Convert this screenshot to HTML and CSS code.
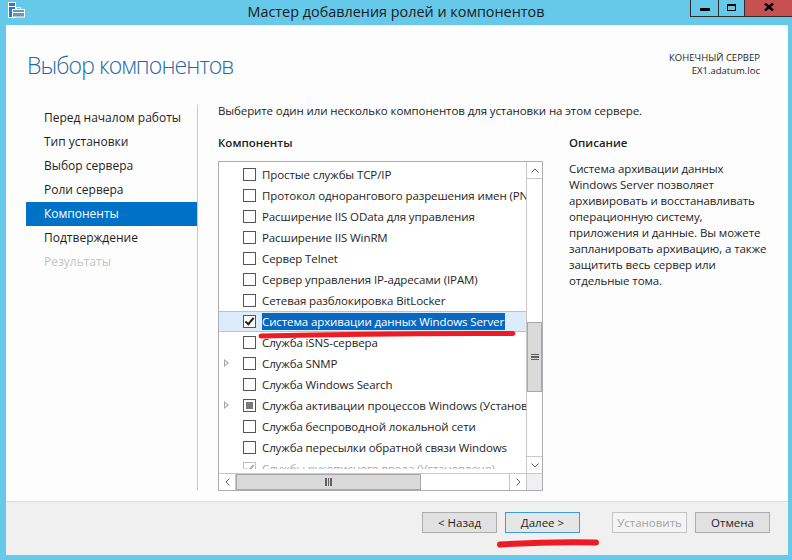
FILE: index.html
```html
<!DOCTYPE html>
<html lang="ru">
<head>
    <meta charset="UTF-8">
    <title>Мастер добавления ролей и компонентов</title>
    <link rel="stylesheet" href="styles.css">
</head>
<body>

<div class="window">
    <div class="titlebar">
        <div class="title-left">
            <svg class="app-icon" width="17" height="16" viewBox="0 0 17 16">
                <rect x="0.5" y="0.5" width="7" height="15" fill="#1f7fd0" stroke="#fff"/>
                <line x1="1" y1="4.5" x2="7" y2="4.5" stroke="#fff"/>
                <rect x="4.5" y="7.5" width="12" height="7.5" fill="#6d93b8" stroke="#fff"/>
                <path d="M8.5 7.5 V5.5 H12.5 V7.5" fill="none" stroke="#fff"/>
                <line x1="5" y1="10.5" x2="16" y2="10.5" stroke="#fff"/>
            </svg>
        </div>
        <div class="title">Мастер добавления ролей и компонентов</div>
        <div class="title-right">
            <div class="controls">
                <span class="ctl ctl-min"><i></i></span>
                <span class="ctl ctl-max"><i></i></span>
                <span class="ctl ctl-close">
                    <svg width="10" height="8" viewBox="0 0 10 8">
                        <path d="M1 0.5 L9 7.5 M9 0.5 L1 7.5" stroke="#000" stroke-width="2.4"/>
                    </svg>
                </span>
            </div>
        </div>
    </div>

    <div class="client">
        <div class="page">
            <div class="page-header">
                <h1>Выбор компонентов</h1>
                <div class="target">КОНЕЧНЫЙ СЕРВЕР<br>EX1.adatum.loc</div>
            </div>

            <div class="page-body">
                <ul class="steps">
                    <li>Перед началом работы</li>
                    <li>Тип установки</li>
                    <li>Выбор сервера</li>
                    <li>Роли сервера</li>
                    <li class="active">Компоненты</li>
                    <li>Подтверждение</li>
                    <li class="disabled">Результаты</li>
                </ul>

                <div class="main">
                    <p class="intro">Выберите один или несколько компонентов для установки на этом сервере.</p>
                    <div class="columns">
                        <div class="col-list">
                            <div class="col-head">Компоненты</div>
                            <div class="listbox">
                                <div class="rows">
                                    <div class="row"><span class="exp"></span><span class="cb"></span><span class="label">Простые службы TCP/IP</span></div>
                                    <div class="row"><span class="exp"></span><span class="cb"></span><span class="label">Протокол однорангового разрешения имен (PNRP)</span></div>
                                    <div class="row"><span class="exp"></span><span class="cb"></span><span class="label">Расширение IIS OData для управления</span></div>
                                    <div class="row"><span class="exp"></span><span class="cb"></span><span class="label">Расширение IIS WinRM</span></div>
                                    <div class="row"><span class="exp"></span><span class="cb"></span><span class="label">Сервер Telnet</span></div>
                                    <div class="row"><span class="exp"></span><span class="cb"></span><span class="label">Сервер управления IP-адресами (IPAM)</span></div>
                                    <div class="row"><span class="exp"></span><span class="cb"></span><span class="label">Сетевая разблокировка BitLocker</span></div>
                                    <div class="row selected"><span class="exp"></span><span class="cb checked"></span><span class="label">Система архивации данных Windows Server</span></div>
                                    <div class="row"><span class="exp"></span><span class="cb"></span><span class="label">Служба iSNS-сервера</span></div>
                                    <div class="row"><span class="exp has-children"></span><span class="cb"></span><span class="label">Служба SNMP</span></div>
                                    <div class="row"><span class="exp"></span><span class="cb"></span><span class="label">Служба Windows Search</span></div>
                                    <div class="row"><span class="exp has-children"></span><span class="cb partial"></span><span class="label">Служба активации процессов Windows (Установлено 2 из 3)</span></div>
                                    <div class="row"><span class="exp"></span><span class="cb"></span><span class="label">Служба беспроводной локальной сети</span></div>
                                    <div class="row"><span class="exp"></span><span class="cb"></span><span class="label">Служба пересылки обратной связи Windows</span></div>
                                    <div class="row installed"><span class="exp"></span><span class="cb checked"></span><span class="label">Службы рукописного ввода (Установлено)</span></div>
                                </div>
                                <div class="vscroll">
                                    <div class="arrow arrow-up">
                                        <svg width="8" height="5" viewBox="0 0 8 5"><path d="M0.5 4.5 L4 1 L7.5 4.5" fill="none" stroke="#606060"/></svg>
                                    </div>
                                    <div class="track">
                                        <div class="thumb thumb-v"><i></i><i></i><i></i></div>
                                    </div>
                                    <div class="arrow arrow-down">
                                        <svg width="8" height="5" viewBox="0 0 8 5"><path d="M0.5 0.5 L4 4 L7.5 0.5" fill="none" stroke="#606060"/></svg>
                                    </div>
                                </div>
                                <div class="hscroll">
                                    <div class="arrow arrow-left">
                                        <svg width="5" height="8" viewBox="0 0 5 8"><path d="M4.5 0.5 L1 4 L4.5 7.5" fill="none" stroke="#606060"/></svg>
                                    </div>
                                    <div class="track">
                                        <div class="thumb thumb-h"><i></i><i></i><i></i></div>
                                    </div>
                                    <div class="arrow arrow-right">
                                        <svg width="5" height="8" viewBox="0 0 5 8"><path d="M0.5 0.5 L4 4 L0.5 7.5" fill="none" stroke="#606060"/></svg>
                                    </div>
                                </div>
                                <div class="corner"></div>
                            </div>
                        </div>
                        <div class="col-desc">
                            <div class="col-head">Описание</div>
                            <p class="desc">Система архивации данных<br>Windows Server позволяет<br>архивировать и восстанавливать<br>операционную систему,<br>приложения и данные. Вы можете<br>запланировать архивацию, а также<br>защитить весь сервер или<br>отдельные тома.</p>
                        </div>
                    </div>
                </div>
            </div>
        </div>

        <div class="footer">
            <button class="btn">&lt; Назад</button>
            <button class="btn btn-default">Далее &gt;</button>
            <button class="btn btn-install" disabled>Установить</button>
            <button class="btn">Отмена</button>
        </div>
    </div>

    <!-- красные пометки поверх скриншота -->
    <svg class="marks" width="792" height="560" viewBox="0 0 792 560">
        <path d="M261 336 Q 380 333 513 333.5" fill="none" stroke="#ed1c24" stroke-width="5" stroke-linecap="round"/>
        <path d="M500 544.5 Q 550 541.5 596 542.5" fill="none" stroke="#ed1c24" stroke-width="6" stroke-linecap="round"/>
    </svg>
</div>

</body>
</html>
```

FILE: styles.css
```css
body {
    margin: 0;
    background-color: #66c9ea;
    font-family: "Open Sans", "Noto Sans", sans-serif;
    color: #1e1e1e;
    overflow: hidden;
}

.window {
    position: relative;
    width: 792px;
    height: 560px;
    display: flex;
    flex-direction: column;
}

/* заголовок окна */
.titlebar {
    height: 25px;
    display: grid;
    grid-template-columns: 1fr auto 1fr;
    align-items: start;
}

.app-icon {
    display: block;
    margin: 2px 0 0 8px;
}

.title {
    font-size: 14.4px;
    line-height: 24px;
    color: #1a1a1a;
}

.title-right {
    display: flex;
    justify-content: flex-end;
}

.controls {
    display: flex;
    height: 16px;
    border-left: 1px solid #2d2d2d;
    border-bottom: 1px solid #2d2d2d;
}

.ctl {
    display: flex;
    justify-content: center;
    align-items: center;
    height: 16px;
}

.ctl-min {
    width: 27px;
    border-right: 1px solid #2d2d2d;
}

.ctl-min i {
    display: block;
    width: 10px;
    height: 3px;
    background: #000;
    margin-top: 3px;
}

.ctl-max {
    width: 25px;
    border-right: 1px solid #2d2d2d;
}

.ctl-max i {
    display: block;
    box-sizing: border-box;
    width: 9px;
    height: 7px;
    border: 1.5px solid #000;
    border-top-width: 2px;
    margin-top: -2px;
}

.ctl-close {
    width: 47px;
    background-color: #c75050;
}

.ctl-close svg {
    display: block;
    margin-top: -2px;
}

/* клиентская область */
.client {
    flex: 1;
    margin: 0 4px 5px 6px;
    background-color: #fdfdfd;
    display: flex;
    flex-direction: column;
}

.page {
    flex: 1;
}

.page-header {
    height: 78px;
    display: flex;
    justify-content: space-between;
    align-items: flex-start;
    padding: 0 28px 0 21px;
}

.page-header h1 {
    margin: 24px 0 0;
    font-size: 23px;
    line-height: 32px;
    font-weight: 300;
    letter-spacing: -0.9px;
    color: #1f6aa5;
}

.target {
    margin-top: 26px;
    font-size: 9.5px;
    line-height: 13px;
    text-align: right;
    color: #1e1e1e;
}

.page-body {
    display: flex;
}

.steps {
    list-style: none;
    margin: 2px 0 0 20px;
    padding: 1px 0 0;
    width: 172px;
    height: 385px;
    box-sizing: border-box;
    border-right: 1px solid #c8c8c8;
}

.steps li {
    height: 24px;
    line-height: 24px;
    padding-left: 18px;
    font-size: 12px;
    color: #1e1e1e;
}

.steps li.active {
    background-color: #0072c6;
    color: #fff;
}

.steps li.disabled {
    color: #c4c4c4;
}

.main {
    padding-left: 20px;
}

.intro {
    margin: 0;
    font-size: 11.5px;
    letter-spacing: -0.1px;
    line-height: 16px;
}

.columns {
    display: flex;
    margin-top: 16px;
}

.col-head {
    font-size: 11.5px;
    line-height: 16px;
    font-weight: 600;
    margin-bottom: 10px;
}

/* список компонентов */
.listbox {
    width: 325px;
    height: 330px;
    box-sizing: border-box;
    border: 1px solid #abadb3;
    display: grid;
    grid-template-columns: 1fr 16px;
    grid-template-rows: 1fr 17px;
    background: #fff;
}

.rows {
    overflow: hidden;
    box-sizing: border-box;
    padding-top: 2px;
    border-bottom: 4px solid #fff;
    min-width: 0;
}

.row {
    height: 21px;
    box-sizing: border-box;
    display: flex;
    align-items: center;
    white-space: nowrap;
    font-size: 11.5px;
    letter-spacing: -0.1px;
}

.row.selected {
    background-color: #deebfb;
    border-top: 1px solid #a3c7ee;
    border-bottom: 1px solid #a3c7ee;
}

.row.selected .label {
    background-color: #0b68c0;
    color: #fff;
    line-height: 17px;
    padding-right: 1px;
}

.row.installed .label {
    color: #a8a8a8;
}

.exp {
    width: 24px;
    height: 21px;
    flex-shrink: 0;
    position: relative;
}

.exp.has-children::before {
    content: "";
    position: absolute;
    left: 5px;
    top: 6px;
    border-left: 5px solid #a6a6a6;
    border-top: 4px solid transparent;
    border-bottom: 4px solid transparent;
}

.exp.has-children::after {
    content: "";
    position: absolute;
    left: 6px;
    top: 8px;
    border-left: 2px solid #fff;
    border-top: 2px solid transparent;
    border-bottom: 2px solid transparent;
}

.cb {
    width: 13px;
    height: 13px;
    box-sizing: border-box;
    border: 1px solid #555;
    background: #fff;
    flex-shrink: 0;
    margin-right: 6px;
    position: relative;
}

.cb.checked::after {
    content: "";
    position: absolute;
    left: 3px;
    top: 0px;
    width: 3px;
    height: 7px;
    border-right: 2px solid #222;
    border-bottom: 2px solid #222;
    transform: rotate(40deg);
}

.cb.partial::after {
    content: "";
    position: absolute;
    left: 2px;
    top: 2px;
    width: 7px;
    height: 7px;
    background: #7a7a7a;
}

.row.installed .cb {
    border-color: #c0c0c0;
}

.row.installed .cb::after {
    border-color: #b0b0b0;
}

/* полосы прокрутки */
.vscroll {
    border-left: 1px solid #c8c8c8;
    display: flex;
    flex-direction: column;
}

.vscroll .arrow {
    height: 16px;
    display: flex;
    justify-content: center;
    align-items: center;
}

.arrow-up {
    border-bottom: 1px solid #c8c8c8;
}

.arrow-down {
    border-top: 1px solid #c8c8c8;
}

.vscroll .track {
    flex: 1;
}

.thumb {
    box-sizing: border-box;
    background-color: #dadada;
    border: 1px solid #a8a8a8;
    display: flex;
    justify-content: center;
    align-items: center;
}

.thumb-v {
    height: 70px;
    margin-top: 143px;
    flex-direction: column;
    gap: 1px;
}

.thumb-v i {
    display: block;
    width: 8px;
    height: 1.5px;
    background: #606060;
}

.hscroll {
    border-top: 1px solid #c8c8c8;
    display: flex;
}

.hscroll .arrow {
    width: 16px;
    display: flex;
    justify-content: center;
    align-items: center;
}

.arrow-left {
    border-right: 1px solid #c8c8c8;
}

.arrow-right {
    border-left: 1px solid #c8c8c8;
}

.hscroll .track {
    flex: 1;
    display: flex;
}

.thumb-h {
    width: 185px;
    gap: 1px;
}

.thumb-h i {
    display: block;
    width: 1.5px;
    height: 8px;
    background: #606060;
}

.corner {
    background-color: #f0f0f0;
    border-top: 1px solid #c8c8c8;
    border-left: 1px solid #c8c8c8;
}

/* описание */
.col-desc {
    margin-left: 26px;
}

.desc {
    margin: 0;
    font-size: 11.5px;
    letter-spacing: -0.1px;
    line-height: 16px;
}

/* нижняя панель с кнопками */
.footer {
    height: 43px;
    border-top: 1px solid #dcdcdc;
    background-color: #f0f0f0;
    display: flex;
    justify-content: flex-end;
    align-items: flex-start;
    padding: 10px 18px 0 0;
    box-sizing: content-box;
}

.btn {
    width: 75px;
    height: 21px;
    margin-left: 8px;
    padding: 0;
    font-family: "Open Sans", "Noto Sans", sans-serif;
    font-size: 11.5px;
    color: #1e1e1e;
    background-color: #e1e1e1;
    border: 1px solid #adadad;
    border-radius: 0;
}

.btn-default {
    border-color: #3c9be6;
    background-color: #e6e6e6;
}

.btn-install {
    margin-left: 32px;
    color: #a3a3a3;
    background-color: #f4f4f4;
    border-color: #c4c4c4;
}

.marks {
    position: absolute;
    left: 0;
    top: 0;
    pointer-events: none;
}
```
